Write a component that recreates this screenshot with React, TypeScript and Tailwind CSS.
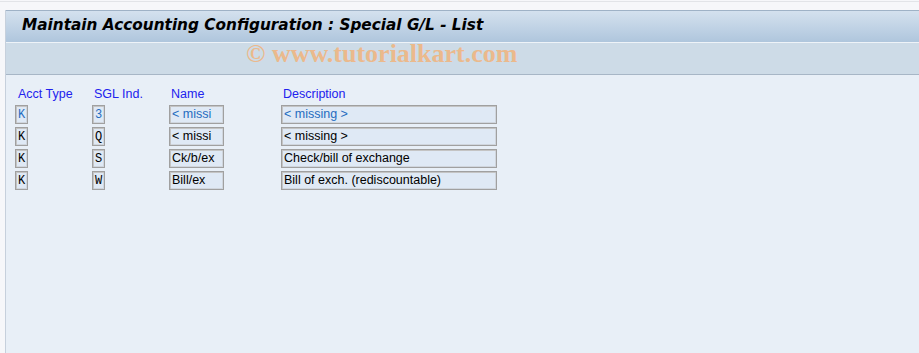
const rows = [
  { type: "K", sgl: "3", name: "< missi", desc: "< missing >", blue: true },
  { type: "K", sgl: "Q", name: "< missi", desc: "< missing >", blue: false },
  { type: "K", sgl: "S", name: "Ck/b/ex", desc: "Check/bill of exchange", blue: false },
  { type: "K", sgl: "W", name: "Bill/ex", desc: "Bill of exch. (rediscountable)", blue: false },
];

const Box = ({ text, w, mono, blue }: { text: string; w: string; mono?: boolean; blue?: boolean }) => (
  <div
    className={`${w} h-[19px] border border-[#a0a0a0] shadow-[inset_1px_1px_0_#c4c4c4,inset_-1px_-1px_0_#d0d6de] bg-[#dfe9f5] flex items-center leading-none ${
      mono ? "justify-center font-['Liberation_Mono',monospace] text-[12px]" : "pl-[2px] text-[12.5px]"
    } ${blue ? "text-[#1f6cc0]" : "text-black"}`}
  >
    {text}
  </div>
);

const App = () => {
  return (
    <div className="w-[919px] h-[353px] bg-[#f6f7fa] font-['Liberation_Sans',sans-serif] overflow-hidden flex flex-col">
      <div className="h-[1px] mt-[1px] bg-[#e2e4e8]" />
      <div className="h-[8px]" />
      <div className="flex-1 ml-[5px] border-l border-[#c6d0dc] bg-[#e8eff7] flex flex-col">
        <div className="border-t border-[#9fb2c6] h-[32px] bg-gradient-to-b from-[#d4e1ee] to-[#afc6dd] flex items-start pt-[4px] pl-[16px]">
          <h1 className="font-['DejaVu_Sans',sans-serif] font-bold italic text-[15.3px] text-black leading-[20px]">
            Maintain Accounting Configuration : Special G/L - List
          </h1>
        </div>
        <div className="h-[1px] bg-[#eef3f8]" />
        <div className="h-[32px] bg-[#cddbe7] border-b border-[#a7b6c6] flex items-start pl-[240px]">
          <span className="font-['Liberation_Serif',serif] font-bold text-[26px] text-[#ebb98c] leading-[22px]">
            © www.tutorialkart.com
          </span>
        </div>
        <div className="pt-[11px] pl-[9px]">
          <div className="flex text-[12.5px] text-[#2222ee] h-[16px] items-center">
            <span className="w-[77px] pl-[3px]">Acct Type</span>
            <span className="w-[77px] pl-[2px]">SGL Ind.</span>
            <span className="w-[112px] pl-[2px]">Name</span>
            <span className="pl-[2px]">Description</span>
          </div>
          <div className="flex flex-col gap-[3px] mt-[3px]">
            {rows.map((r, i) => (
              <div key={i} className="flex">
                <div className="w-[77px]">
                  <Box text={r.type} w="w-[13px]" mono blue={r.blue} />
                </div>
                <div className="w-[77px]">
                  <Box text={r.sgl} w="w-[13px]" mono blue={r.blue} />
                </div>
                <div className="w-[112px]">
                  <Box text={r.name} w="w-[55px]" blue={r.blue} />
                </div>
                <Box text={r.desc} w="w-[216px]" blue={r.blue} />
              </div>
            ))}
          </div>
        </div>
      </div>
    </div>
  );
};

export default App;
